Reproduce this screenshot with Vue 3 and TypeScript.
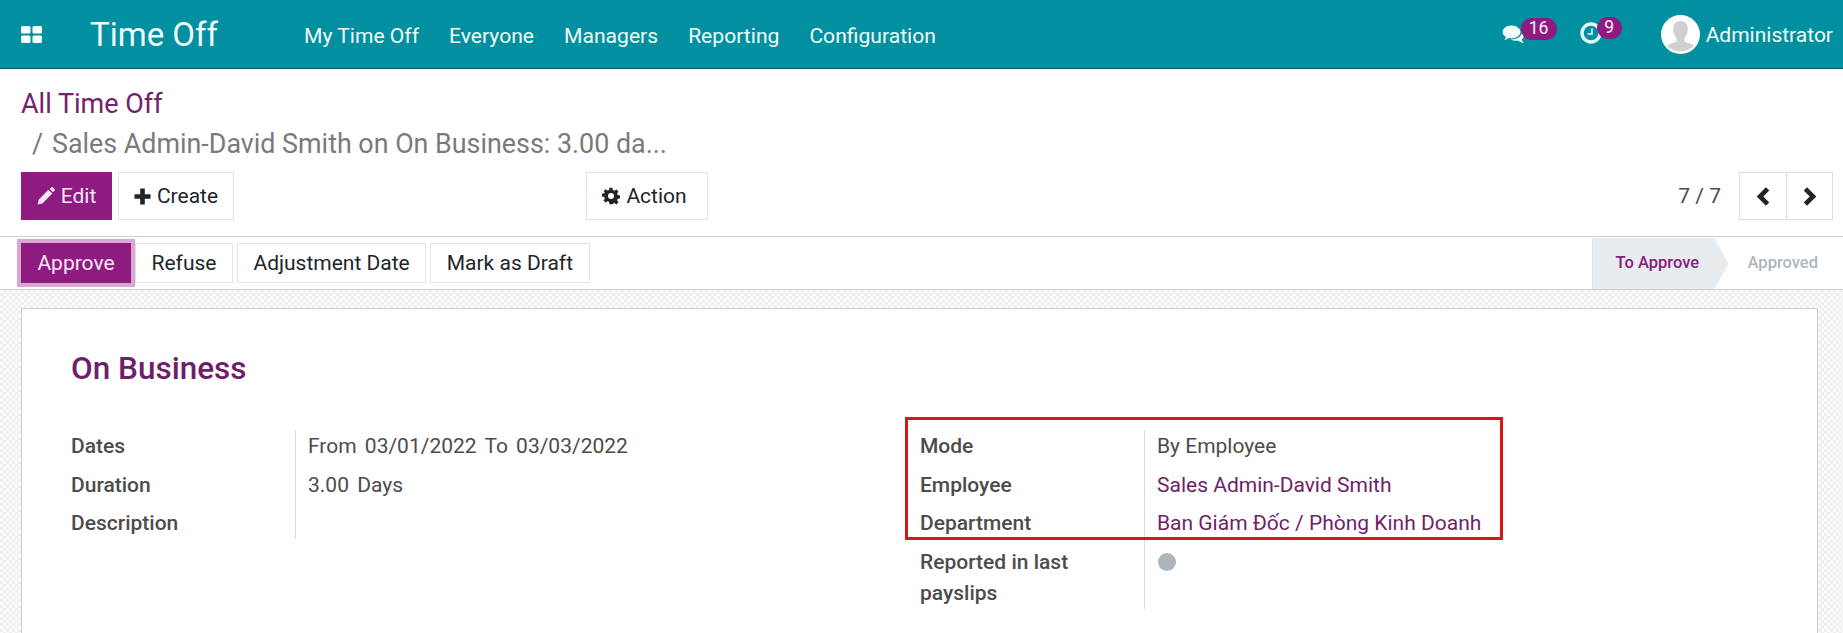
<script setup lang="ts">
const navItems: string[] = ['My Time Off', 'Everyone', 'Managers', 'Reporting', 'Configuration']
const leftRows = [
  { label: 'Dates', value: 'From 03/01/2022 To 03/03/2022' },
  { label: 'Duration', value: '3.00 Days' },
  { label: 'Description', value: '' },
]
const rightRows = [
  { label: 'Mode', value: 'By Employee', link: false },
  { label: 'Employee', value: 'Sales Admin-David Smith', link: true },
  { label: 'Department', value: 'Ban Giám Đốc / Phòng Kinh Doanh', link: true },
]
</script>

<template>
  <div class="page">
    <header class="topbar">
      <svg class="apps" viewBox="0 0 21 17" aria-hidden="true">
        <rect x="0" y="0" width="9.5" height="7.5" rx="1.6" />
        <rect x="11.5" y="0" width="9.5" height="7.5" rx="1.6" />
        <rect x="0" y="9.5" width="9.5" height="7.5" rx="1.6" />
        <rect x="11.5" y="9.5" width="9.5" height="7.5" rx="1.6" />
      </svg>
      <span class="brand">Time Off</span>
      <nav class="nav">
        <a v-for="item in navItems" :key="item">{{ item }}</a>
      </nav>
      <div class="systray">
        <div class="tray-item chat">
          <svg viewBox="0 0 24 20" class="tray-icon" aria-hidden="true">
            <path d="M9.5 1C4.6 1 .6 3.9.6 7.4c0 2 1.3 3.8 3.3 5-.2 1.2-.9 2.2-1.9 3.1 1.9-.2 3.5-.9 4.8-2 .9.2 1.8.3 2.7.3 4.9 0 8.9-2.9 8.9-6.4S14.4 1 9.5 1z" />
            <path d="M19.8 8.8c-.6 3.4-4.6 6-9.4 6-.6 0-1.2 0-1.8-.1 1.5 1 3.4 1.5 5.2 1.5.7 0 1.4-.1 2-.2 1.5 1.2 3.6 2.2 6.2 2.8-1-1-1.9-2.3-2.3-3.7 1.100-1 1.900-2.300 1.900-3.700 0-1-.7-2-1.800-2.600z" />
          </svg>
          <span class="badge badge-chat">16</span>
        </div>
        <div class="tray-item clock">
          <svg viewBox="0 0 22 22" class="tray-icon" aria-hidden="true">
            <circle cx="11" cy="11" r="9" fill="none" stroke="#e4f7f7" stroke-width="3.4" />
            <path d="M12 6.5v5.500H7.500" fill="none" stroke="#e4f7f7" stroke-width="1.6" />
          </svg>
          <span class="badge badge-clock">9</span>
        </div>
        <div class="user">
          <svg class="avatar" viewBox="0 0 39 39" aria-hidden="true">
            <circle cx="19.5" cy="19.5" r="19.5" fill="#fff" />
            <path d="M19.5 6c4.7 0 7.3 3.3 7.3 8 0 3.8-1.5 7-3.3 9v3.5c3 1.3 7.5 2.3 9.3 4.5a19.5 19.5 0 0 1-26.600 0c1.800-2.200 6.300-3.200 9.300-4.500V23c-1.800-2-3.300-5.200-3.300-9 0-4.700 2.600-8 7.300-8z" fill="#d0d0d0" />
          </svg>
          <span>Administrator</span>
        </div>
      </div>
    </header>

    <section class="control">
      <div class="crumb-root">All Time Off</div>
      <div class="crumb-current"><span class="slash">/</span>Sales Admin-David Smith on On Business: 3.00 da...</div>
      <div class="actions">
        <button class="btn primary tall">
          <svg class="ico" viewBox="0 0 18 18" aria-hidden="true">
            <path d="M14.3.6c.5-.5 1.200-.5 1.700 0l1.400 1.400c.5.5.5 1.200 0 1.700l-1.500 1.500-3.100-3.100zM11.400 2.700l3.900 3.900-9.900 9.900-4.800 1.100 1-4.900z" />
          </svg>Edit
        </button>
        <button class="btn tall">
          <svg class="ico plus" viewBox="0 0 17 17" aria-hidden="true">
            <path d="M6.2.5h4.600v5.700h5.700v4.600h-5.700v5.700H6.200v-5.700H.5V6.200h5.700z" />
          </svg>Create
        </button>
        <button class="btn tall action">
          <svg class="ico" viewBox="0 0 24 24" aria-hidden="true">
            <path fill-rule="evenodd" d="M10 1h4l.6 3.2 1.900.8 2.700-1.800 2.800 2.800-1.800 2.700.8 1.900 3 .6v4l-3 .6-.8 1.900 1.800 2.700-2.800 2.800-2.700-1.800-1.900.8L14 23h-4l-.6-3.200-1.900-.8-2.700 1.800L2 18l1.800-2.700-.8-1.900-3-.6V9l3-.6.8-1.900L2 5.800 4.800 3l2.700 1.800 1.900-.8zM12 8a4 4 0 1 0 0 8 4 4 0 0 0 0-8z" />
          </svg>Action
        </button>
        <div class="pager">
          <span class="count">7 / 7</span>
          <div class="pager-group">
            <button class="pg" aria-label="Previous">
              <svg viewBox="0 0 14 18" aria-hidden="true"><path d="M10.5 2.5L4 9l6.500 6.500" /></svg>
            </button>
            <button class="pg" aria-label="Next">
              <svg viewBox="0 0 14 18" aria-hidden="true"><path d="M3.5 2.5L10 9l-6.500 6.500" /></svg>
            </button>
          </div>
        </div>
      </div>
    </section>

    <section class="statusbar">
      <div class="status-actions">
        <button class="btn primary short focus">Approve</button>
        <button class="btn short">Refuse</button>
        <button class="btn short">Adjustment Date</button>
        <button class="btn short">Mark as Draft</button>
      </div>
      <div class="steps">
        <span class="step current">To Approve</span>
        <span class="step">Approved</span>
      </div>
    </section>

    <main class="sheet-bg">
      <article class="sheet">
        <h1 class="title">On Business</h1>
        <div class="groups">
          <div class="group left">
            <div v-for="(row, i) in leftRows" :key="row.label" class="row" :class="{ last: i === leftRows.length - 1 }">
              <div class="label">{{ row.label }}</div>
              <div class="value spaced">{{ row.value }}</div>
            </div>
          </div>
          <div class="group right">
            <div v-for="row in rightRows" :key="row.label" class="row">
              <div class="label">{{ row.label }}</div>
              <div class="value" :class="{ link: row.link }">{{ row.value }}</div>
            </div>
            <div class="row last">
              <div class="label">Reported in last payslips</div>
              <div class="value"><span class="dot"></span></div>
            </div>
            <div class="highlight"></div>
          </div>
        </div>
      </article>
    </main>
  </div>
</template>

<style>
html, body { margin: 0; padding: 0; overflow: hidden; background: #fff; }
</style>

<style scoped>
.page {
  width: 1843px;
  height: 633px;
  overflow: hidden;
  display: flex;
  flex-direction: column;
  font-family: Roboto, "Noto Sans", sans-serif;
  font-size: 21px;
  line-height: 31px;
  color: #4c4c4c;
  background: #fff;
}
.topbar {
  flex: none;
  height: 69px;
  box-sizing: border-box;
  border-bottom: 1px solid #0a5c66;
  background: #01909f;
  color: #f2fbfb;
  display: flex;
  align-items: center;
  padding: 2px 10px 0 21px;
}
.apps { width: 21px; height: 17px; fill: #fff; flex: none; margin-top: -2px; }
.brand { margin-left: 48px; font-size: 33px; line-height: 40px; width: 128px; white-space: nowrap; }
.nav { margin-left: 86px; display: flex; gap: 30px; font-size: 21.100px; }
.systray { margin-left: auto; display: flex; align-items: center; }
.tray-item { position: relative; }
.tray-icon { display: block; }
.chat { width: 24px; height: 21px; margin-top: -2px; }
.chat .tray-icon { width: 24px; height: 21px; fill: #f6fdfd; }
.clock { width: 22px; height: 22px; margin-left: 54px; margin-top: -4px; }
.clock .tray-icon { width: 22px; height: 22px; }
.badge {
  position: absolute;
  display: block;
  height: 22px;
  line-height: 21px;
  border-radius: 12px;
  background: #8f1a80;
  color: #fbeef9;
  font-size: 17.500px;
  text-align: center;
}
.badge-chat { left: 19px; top: -6px; width: 36px; }
.badge-clock { left: 17px; top: -5px; width: 25px; }
.user { display: flex; align-items: center; gap: 6px; margin-left: 59px; font-size: 21px; }
.avatar { width: 39px; height: 39px; flex: none; margin-top: -2px; }

.control { flex: none; height: 167px; padding: 15px 10px 0 21px; box-sizing: border-box; }
.crumb-root { font-size: 27px; line-height: 40px; color: #74226c; }
.crumb-current { font-size: 26.850px; line-height: 40px; color: #7a7a7a; white-space: nowrap; }
.slash { display: inline-block; margin-left: 11px; width: 20px; }
.actions { display: flex; align-items: center; margin-top: 8px; }

.btn {
  font: inherit;
  font-size: 21px;
  line-height: 28px;
  box-sizing: border-box;
  border: 1px solid #e3e3e3;
  background: #fff;
  color: #212529;
  display: inline-flex;
  align-items: center;
  justify-content: center;
  padding: 0;
  margin: 0;
}
.tall { height: 48px; }
.short { height: 40px; padding: 0 15.500px; }
.btn.primary { background: #8f1a80; border-color: #8f1a80; color: #f9e6f6; }
.tall.primary { width: 91px; margin-right: 6px; }
.tall { width: 116px; }
.tall.action { width: 122px; margin-left: 352px; padding-right: 5px; }
.ico { width: 18px; height: 18px; fill: currentColor; margin-right: 6px; flex: none; }
.ico.plus { width: 17px; height: 17px; }
.focus { box-shadow: 0 0 0 4px #d7a9d1; }

.pager { margin-left: auto; display: flex; align-items: center; }
.count { font-size: 21px; color: #4c4c4c; margin-right: 18px; }
.pager-group { display: flex; border: 1px solid #e0e0e0; height: 48px; box-sizing: border-box; }
.pg {
  width: 46px;
  padding: 0;
  border: 0;
  background: #fff;
  display: flex;
  align-items: center;
  justify-content: center;
}
.pg + .pg { border-left: 1px solid #e0e0e0; }
.pg svg { width: 17px; height: 21px; fill: none; stroke: #212529; stroke-width: 4px; }

.statusbar {
  flex: none;
  height: 54px;
  box-sizing: border-box;
  border-top: 1px solid #cfcfcf;
  border-bottom: 1px solid #cfcfcf;
  display: flex;
  align-items: center;
  justify-content: space-between;
  padding-left: 21px;
}
.status-actions { display: flex; gap: 4px; }
.status-actions .btn.focus { position: relative; z-index: 1; width: 110px; padding: 0; }
.steps { display: flex; align-self: stretch; font-size: 16.500px; font-weight: 500; color: #adb5bd; margin-top: 1px; }
.step { display: flex; align-items: center; padding: 0 25px 0 33px; line-height: 1; }
.step.current {
  position: relative;
  background: #e9ecef;
  color: #84207a;
  padding: 0 16px 0 23px;
  width: 83px;
  white-space: nowrap;
  border-left: 1px solid #dee2e6;
}
.step.current::after {
  content: "";
  position: absolute;
  left: 100%;
  top: 0;
  width: 14px;
  height: 100%;
  background: #e9ecef;
  clip-path: polygon(0 0, 100% 50%, 0 100%);
}

.sheet-bg {
  flex: 1;
  min-height: 0;
  padding: 18px 25px 0 21px;
  background-color: #f6f6f6;
  background-image: repeating-conic-gradient(#efefef 0 25%, #fbfbfb 0 50%);
  background-size: 6px 6px;
}
.sheet {
  box-sizing: border-box;
  height: 100%;
  background: #fff;
  border: 1px solid #cfcfcf;
  border-bottom: 0;
  padding: 40px 49px 0;
}
.title { margin: 0; font-size: 31.500px; line-height: 40px; font-weight: 500; color: #6f1f6a; }
.groups { display: flex; margin-top: 41px; }
.group { position: relative; }
.group.left { width: 849px; flex: none; }
.group.right { width: 600px; flex: none; }
.row { display: grid; grid-template-columns: 224px 1fr; }
.label, .value { padding-top: 1px; padding-bottom: 6.500px; }
.row.last .label, .row.last .value { padding-bottom: 0; }
.label { font-weight: 500; color: #4c4c4c; }
.value { border-left: 1px solid #dcdcdc; padding-left: 12px; min-height: 31px; }
.spaced { word-spacing: 3px; }
.link { color: #6f1f6a; }
.dot { display: block; width: 18px; height: 18px; margin: 6px 0 0 1px; border-radius: 50%; background: #adb5bd; }
.highlight {
  position: absolute;
  left: -15px;
  top: -13px;
  width: 598px;
  height: 123px;
  box-sizing: border-box;
  border: 3px solid #d9141a;
  pointer-events: none;
}
</style>
